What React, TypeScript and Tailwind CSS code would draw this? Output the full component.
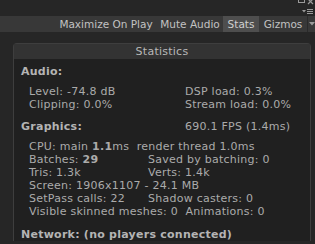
const FONT = "font-['DejaVu_Sans',sans-serif]";

function Row({ left, right, w }: { left: React.ReactNode; right?: React.ReactNode; w: string }) {
  return (
    <div className="flex h-[13px] whitespace-pre">
      <div className={`${w} shrink-0`}>{left}</div>
      {right && <div>{right}</div>}
    </div>
  );
}

export default function App() {
  return (
    <div className={`relative w-[315px] h-[244px] overflow-hidden bg-[#262626] ${FONT} text-[11px] leading-[13px]`}>
      {/* window controls, top right */}
      <div className="h-[16px] flex justify-end pr-[1px]">
        <svg width="20" height="16" viewBox="0 0 20 16" className="text-[#9a9a9a]">
          <rect x="4.5" y="-2.5" width="6" height="5" fill="none" stroke="currentColor" />
          <path d="M14 -1 L19 4 M19 -1 L14 4" stroke="currentColor" strokeWidth="1.2" />
          <path d="M8 10 L12 10 L10 12.5 Z" fill="currentColor" />
          <path d="M13 9.5 H19 M13 11.5 H19 M13 13.5 H19" stroke="currentColor" />
        </svg>
      </div>

      {/* toolbar */}
      <div className="h-[16px] flex bg-[#383838] text-[#c2c2c2] text-[10.5px]">
        <div className="flex-1" />
        <div className="w-[102px] flex items-center justify-center">Maximize On Play</div>
        <div className="w-[66px] flex items-center justify-center">Mute Audio</div>
        <div className="w-[36px] flex items-center justify-center bg-[#4e4e4e] text-[#d0d0d0]">Stats</div>
        <div className="w-[48px] flex items-center justify-center">Gizmos</div>
        <div className="w-[8px] flex items-center border-l border-[#2a2a2a]">
          <svg width="6" height="4" viewBox="0 0 6 4" className="ml-[1px]">
            <path d="M0 0 H6 L3 3.5 Z" fill="#9a9a9a" />
          </svg>
        </div>
      </div>

      {/* stats panel */}
      <div className="ml-[13px] mt-[11px] w-[298px] rounded-t-[4px] border border-b-0 border-[#3e3e3e] bg-[#202020] text-[#ababab] tracking-[0.25px]">
        <div className="h-[15px] bg-[#333333] flex items-center justify-center text-[#b8b8b8]">Statistics</div>

        <div className="pl-[7px] pt-[6px]">
          <div className="font-bold text-[#b4b4b4]">Audio:</div>
          <div className="pl-[8px] mt-[7px]">
            <Row w="w-[156px]" left="Level: -74.8 dB" right="DSP load: 0.3%" />
            <Row w="w-[156px]" left="Clipping: 0.0%" right="Stream load: 0.0%" />
          </div>

          <div className="mt-[9px] flex h-[13px]">
            <div className="w-[164px] font-bold text-[#b4b4b4]">Graphics:</div>
            <div>690.1 FPS (1.4ms)</div>
          </div>
          <div className="pl-[8px] mt-[7px]">
            <Row w="w-full" left={<>CPU: main <b>1.1</b>ms  render thread 1.0ms</>} />
            <Row w="w-[119px]" left={<>Batches: <b>29</b></>} right="Saved by batching: 0" />
            <Row w="w-[119px]" left="Tris: 1.3k" right="Verts: 1.4k" />
            <Row w="w-full" left="Screen: 1906x1107 - 24.1 MB" />
            <Row w="w-[119px]" left="SetPass calls: 22" right="Shadow casters: 0" />
            <Row w="w-full" left="Visible skinned meshes: 0  Animations: 0" />
          </div>

          <div className="mt-[10px] font-bold text-[#b4b4b4]">Network: (no players connected)</div>
        </div>
      </div>
    </div>
  );
}
